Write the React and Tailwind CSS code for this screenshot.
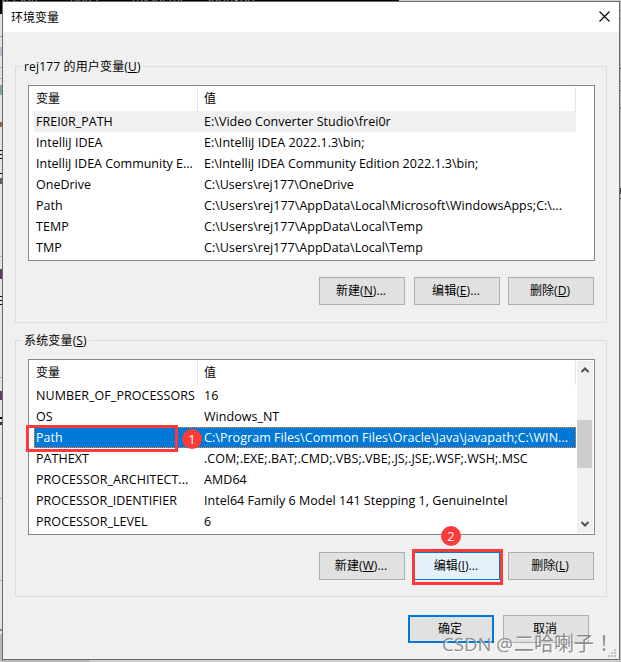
const userVars = [
  ['FREI0R_PATH', 'E:\\Video Converter Studio\\frei0r', 'tracking-[0.03px]'],
  ['IntelliJ IDEA', 'E:\\IntelliJ IDEA 2022.1.3\\bin;', 'tracking-[0.02px]'],
  ['IntelliJ IDEA Community E...', 'E:\\IntelliJ IDEA Community Edition 2022.1.3\\bin;', 'tracking-[-0.01px]'],
  ['OneDrive', 'C:\\Users\\rej177\\OneDrive', ''],
  ['Path', 'C:\\Users\\rej177\\AppData\\Local\\Microsoft\\WindowsApps;C:\\...', 'tracking-[0.04px]'],
  ['TEMP', 'C:\\Users\\rej177\\AppData\\Local\\Temp', 'tracking-[0.03px]'],
  ['TMP', 'C:\\Users\\rej177\\AppData\\Local\\Temp', 'tracking-[0.03px]'],
];

const systemVars = [
  ['NUMBER_OF_PROCESSORS', '16', 'tracking-[0.08px]'],
  ['OS', 'Windows_NT', 'tracking-[0.03px]'],
  ['Path', 'C:\\Program Files\\Common Files\\Oracle\\Java\\javapath;C:\\WIN...', 'tracking-[0.05px]'],
  ['PATHEXT', '.COM;.EXE;.BAT;.CMD;.VBS;.VBE;.JS;.JSE;.WSF;.WSH;.MSC', 'tracking-[0.06px]'],
  ['PROCESSOR_ARCHITECT...', 'AMD64', 'tracking-[0.06px]'],
  ['PROCESSOR_IDENTIFIER', 'Intel64 Family 6 Model 141 Stepping 1, GenuineIntel', 'tracking-[0.03px]'],
  ['PROCESSOR_LEVEL', '6', 'tracking-[0.06px]'],
];

// slivers of the window behind that stick out on either side
const leftEdge = [
  'mt-0 h-3.5 bg-black',
  'mt-[22px] h-px bg-[#8a8a8a]',
  'mt-[10px] h-[9px] bg-[#b4bccb]',
  'mt-[11px] h-px bg-[#b5b5b5]',
  'mt-[10px] h-px bg-[#b5b5b5]',
  'mt-[6px] h-[10px] bg-[#7aa5a0]',
  'mt-[27px] h-[5px] bg-[#8d6a4d]',
  'mt-[23px] h-px bg-black',
  'mt-[3px] h-px bg-black',
  'mt-[3px] h-px bg-black',
  'mt-[14px] h-px bg-black',
  'mt-[4px] h-[6px] bg-[#59656b]',
  'mt-[72px] h-px bg-[#b5b5b5]',
  'mt-[12px] h-[10px] bg-[#5c3a68]',
  'mt-[17px] h-px bg-black',
  'mt-[3px] h-px bg-black',
  'mt-[3px] h-px bg-black',
  'mt-[72px] h-px bg-[#b5b5b5]',
  'mt-[13px] h-[9px] bg-[#5c3a68]',
  'mt-[17px] h-[2px] bg-black',
  'mt-[3px] h-[3px] bg-[#303030]',
  'mt-[73px] h-px bg-[#b5b5b5]',
  'mt-[81px] h-px bg-[#b5b5b5]',
  'mt-[48px] h-[2px] bg-[#858585]',
];

const rightEdge = [
  'mt-[10px] h-px bg-[#9a9a9a]',
  'mt-[7px] h-px bg-[#9a9a9a]',
  'mt-[49px] h-px bg-[#555]',
  'mt-[12px] h-px bg-[#8a8a8a]',
  'mt-[8px] h-px bg-[#8a8a8a]',
  'mt-[16px] h-[2px] bg-[#8a8a8a]',
  'mt-[79px] h-[6px] bg-[#444]',
  'mt-[4px] h-px bg-[#333]',
];

function Button({ children, className = 'border border-[#adadad] bg-[#e1e1e1]' }) {
  return (
    <button className={`flex h-7 w-[86px] items-center justify-center pr-[2px] text-[12px] tracking-[0.08px] ${className}`}>
      <span>{children}</span>
    </button>
  );
}

function Group({ label, accel, className, children }) {
  return (
    <section className={`relative ml-3 h-[257px] w-[592px] border border-[#dcdcdc] ${className}`}>
      <h2 className="absolute -top-[9px] left-[6px] bg-[#f0f0f0] px-[2px] text-[12px] leading-[18px] tracking-[0.16px]">
        {label}(<u>{accel}</u>)
      </h2>
      {children}
    </section>
  );
}

function VarList({ rows, active, selected, scroll }) {
  return (
    <div className="ml-3 flex h-[176px] w-[567px] border border-[#828790] bg-white pt-px">
      <div className="w-[548px] pl-[5px]">
        <div className="flex h-6 w-[542px] border-r border-[#e5e5e5] text-[12px] leading-[24px]">
          <div className="w-[164px] border-r border-[#e5e5e5] pl-[2px]">变量</div>
          <div className="pl-[6px]">值</div>
        </div>
        {rows.map(([name, value, tracking], i) => (
          <div
            key={name}
            className={`relative flex h-[21px] w-[542px] whitespace-nowrap text-[12.5px] leading-[22px] ${tracking} ${
              i === active ? 'bg-[#f0f0f0]' : ''
            } ${i === selected ? 'bg-[#0078d7] text-white outline-1 -outline-offset-1 outline-dotted outline-[#ff8728]' : ''}`}
          >
            <span className="w-[168px] pl-[2px]">{name}</span>
            <span className="pl-[2px]">{value}</span>
            {i === selected && (
              <>
                <div className="absolute -top-[2px] -left-2 h-[27px] w-[152px] border-3 border-[#fd3a3a]" />
                <Badge className="top-[2px] left-[148px]">1</Badge>
              </>
            )}
          </div>
        ))}
      </div>
      {scroll && (
        <div className="flex h-[172px] w-4 flex-col items-center bg-[#f0f0f0] text-[#505050]">
          <Chevron />
          <div className="mt-[42px] mr-px h-12 w-[15px] bg-[#cdcdcd]" />
          <div className="mt-auto rotate-180"><Chevron /></div>
        </div>
      )}
    </div>
  );
}

function Chevron() {
  return (
    <svg className="h-[17px] w-4" viewBox="0 0 16 17" fill="none" stroke="currentColor" strokeWidth="2">
      <path d="M4.5 11 8 7.5 11.5 11" />
    </svg>
  );
}

function Badge({ className, children }) {
  return (
    <span className={`absolute flex size-5 items-center justify-center rounded-full bg-[#fd3a3a] text-[13px] leading-none text-white ${className}`}>
      {children}
    </span>
  );
}

function Grip() {
  return (
    <svg className="absolute right-[3px] bottom-[2px] size-2" viewBox="0 0 8 8" fill="#bfbfbf">
      <path d="M6 0h2v2H6zM3 3h2v2H3zM6 3h2v2H6zM0 6h2v2H0zM3 6h2v2H3zM6 6h2v2H6z" />
    </svg>
  );
}

export default function App() {
  return (
    <div className="relative h-[662px] w-[621px] overflow-hidden bg-[#cfcfcf] pt-px pl-[2px] font-['Open_Sans','Noto_Sans_CJK_SC',sans-serif] text-black">
      <div className="absolute top-0 left-0 flex h-px w-[399px] overflow-hidden bg-black text-[12px] leading-[12px] text-[#999]">
        <span className="-mt-[7px] w-[70px]">versoft</span>
        <span className="-mt-[7px] w-[62px]">hotel</span>
        <span className="-mt-[7px] w-[73px]">mysdeme</span>
        <span className="-mt-[7px]">springbo</span>
      </div>
      <div className="absolute top-0 left-0 h-[634px] w-[2px] bg-[#e3e3e3]">
        {leftEdge.map((c, i) => <div key={i} className={c} />)}
      </div>
      <div className="absolute bottom-0 left-0 h-[28px] w-[90px] bg-[#b8b8b8]" />
      <div className="absolute top-0 right-0 flex h-[662px] w-px flex-col bg-[#bdbdbd]">
        {rightEdge.map((c, i) => <div key={i} className={c} />)}
      </div>

      <main className="relative h-[659px] w-[618px] border border-[#6b6b6b] bg-[#f0f0f0]">
        <header className="flex h-[30px] items-center justify-between bg-white pr-[9px] pl-2 text-[12px]">
          <h1 className="pt-px">环境变量</h1>
          <svg className="mb-[2px] size-[11px]" viewBox="0 0 11 11" stroke="#000" strokeWidth="1.1">
            <path d="M.5.5l10 10M10.5.5l-10 10" />
          </svg>
        </header>

        <Group label="rej177 的用户变量" accel="U" className="mt-[34px] pt-[18px]">
          <VarList rows={userVars} active={0} />
          <div className="mt-4 flex justify-end gap-[8px] pr-3">
            <div className="mr-px"><Button>新建(<u>N</u>)...</Button></div>
            <Button>编辑(<u>E</u>)...</Button>
            <Button>删除(<u>D</u>)</Button>
          </div>
        </Group>

        <Group label="系统变量" accel="S" className="mt-[17px] pt-[18px]">
          <VarList rows={systemVars} selected={2} scroll />
          <div className="mt-[17px] flex justify-end gap-[8px] pr-3">
            <div className="mr-px"><Button>新建(<u>W</u>)...</Button></div>
            <div className="relative">
              <Button className="border border-[#0078d7] bg-[#e5f1fb]">编辑(<u>I</u>)...</Button>
              <div className="absolute -top-[3px] -left-[2px] h-9 w-[91px] border-3 border-[#fd3a3a]" />
              <Badge className="-top-[26px] left-[27px]">2</Badge>
            </div>
            <Button>删除(<u>L</u>)</Button>
          </div>
        </Group>

        <div className="mt-[18px] flex justify-end gap-[9px] pr-[30px]">
          <Button className="border-2 border-[#0078d7] bg-[#e1e1e1]">确定</Button>
          <Button>取消</Button>
        </div>
        <Grip />
      </main>
      <p className="absolute top-[630px] left-[442px] flex text-[20px] leading-7 whitespace-nowrap text-[#808080]/90 [text-shadow:1px_1px_0_#fffc]">
        <span className="w-[72px] text-[18.6px]">CSDN @</span>
        <span>二哈喇子</span>
        <span className="pl-[5px]">！</span>
      </p>
    </div>
  );
}
